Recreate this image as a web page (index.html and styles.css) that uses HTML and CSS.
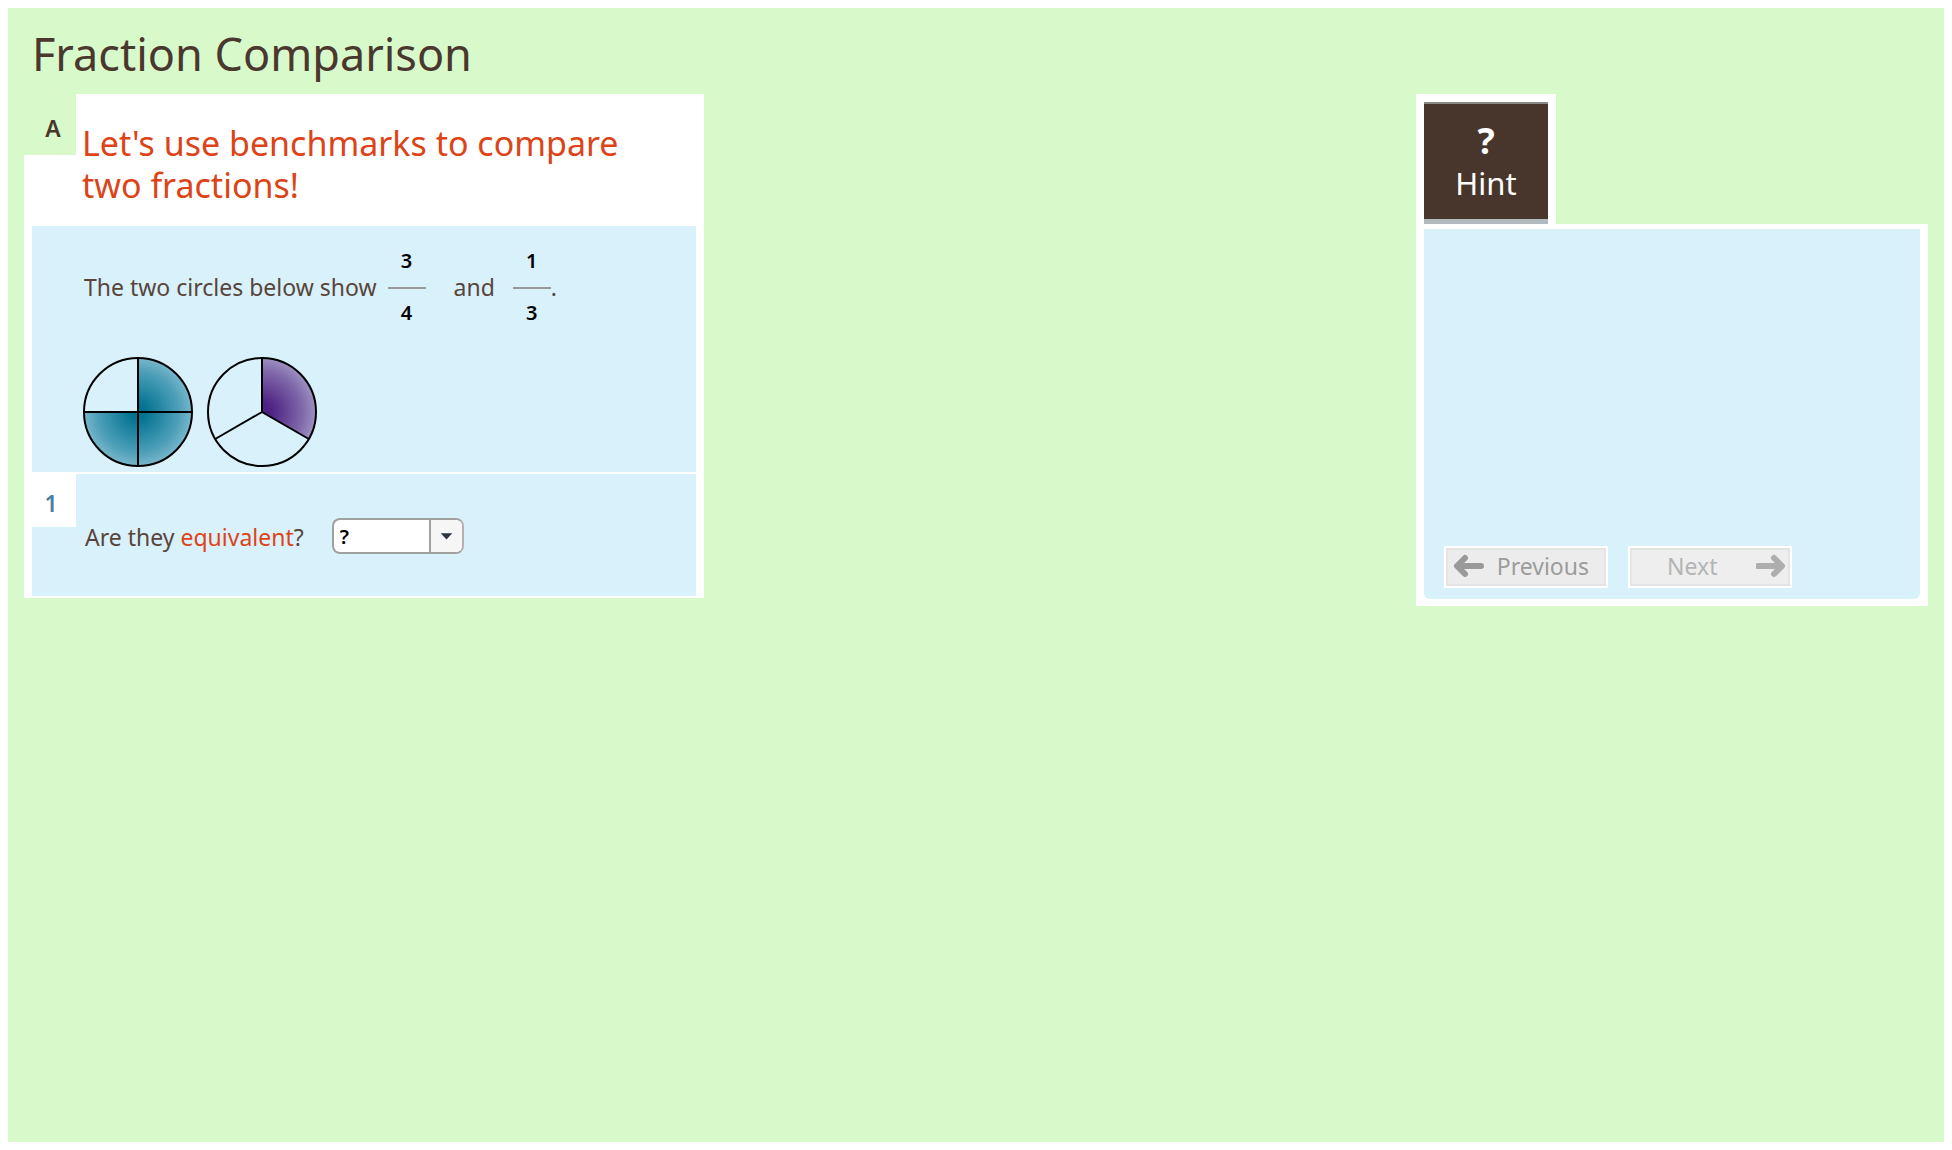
FILE: index.html
```html
<!DOCTYPE html>
<html lang="en">
<head>
<meta charset="utf-8">
<title>Fraction Comparison</title>
<link rel="stylesheet" href="styles.css">
</head>
<body>
<div class="tutor">
  <h1 class="title">Fraction Comparison</h1>
  <div class="columns">
    <main class="lesson">
      <header class="lesson-head">
        <span class="part">A</span>
        <h2 class="goal">Let's use benchmarks to compare two fractions!</h2>
      </header>
      <section class="panel intro">
        <div class="statement">
          <span class="lead">The two circles below show</span>
          <span class="fraction"><span class="num">3</span><span class="den">4</span></span>
          <span class="and">and</span>
          <span class="fraction"><span class="num">1</span><span class="den">3</span></span>
          <span>.</span>
        </div>
        <div class="circles">
          <svg width="112" height="112" viewBox="-56 -56 112 112" role="img" aria-label="Circle with three of four parts shaded">
            <defs>
              <radialGradient id="teal" gradientUnits="userSpaceOnUse" cx="0" cy="0" r="54">
                <stop offset="0" stop-color="#007090"/><stop offset=".15" stop-color="#057492"/><stop offset=".75" stop-color="#4d9fb8"/><stop offset="1" stop-color="#78b6cb"/>
              </radialGradient>
            </defs>
            <path d="M0 0V-54A54 54 0 1 1 -54 0Z" fill="url(#teal)"/>
            <g fill="none" stroke="#000" stroke-width="2"><circle r="54"/><path d="M0-54V54M-54 0H54"/></g>
          </svg>
          <svg width="112" height="112" viewBox="-56 -56 112 112" role="img" aria-label="Circle with one of three parts shaded">
            <defs>
              <radialGradient id="violet" gradientUnits="userSpaceOnUse" cx="0" cy="0" r="54">
                <stop offset="0" stop-color="#4b1d80"/><stop offset=".2" stop-color="#4f2585"/><stop offset=".75" stop-color="#8068a9"/><stop offset="1" stop-color="#9d91c3"/>
              </radialGradient>
            </defs>
            <path d="M0 0V-54A54 54 0 0 1 46.8 27Z" fill="url(#violet)"/>
            <g fill="none" stroke="#000" stroke-width="2"><circle r="54"/><path d="M0-54V0L46.8 27M0 0L-46.8 27"/></g>
          </svg>
        </div>
      </section>
      <section class="panel question">
        <span class="step">1</span>
        <label class="prompt" for="answer">Are they <span class="term">equivalent</span>?</label>
        <span class="combo">
          <select id="answer"><option>?</option><option>Yes</option><option>No</option></select>
          <svg class="combo-arrow" width="35" height="32" viewBox="0 0 35 32" aria-hidden="true"><path d="M11 13H24L17.500 20Z" fill="#2c3442"/></svg>
        </span>
      </section>
    </main>
    <aside class="help">
      <div class="tab">
        <button class="hint" type="button"><span class="mark">?</span><span>Hint</span></button>
      </div>
      <div class="help-box">
        <div class="help-body">
          <button class="nav prev" type="button">
            <svg width="32" height="24" viewBox="0 0 32 24" aria-hidden="true"><path d="M29 12H6M13 4L5 12L13 20" /></svg>
            <span>Previous</span>
          </button>
          <button class="nav next" type="button" disabled>
            <span>Next</span>
            <svg width="30" height="24" viewBox="0 0 30 24" aria-hidden="true"><path d="M2 12H25M18 4L26 12L18 20" /></svg>
          </button>
        </div>
      </div>
    </aside>
  </div>
</div>
</body>
</html>
```
FILE: styles.css
```css
* { box-sizing: border-box; }

body {
  margin: 0;
  padding: 8px;
  min-height: 100vh;
  display: flex;
  background: #fff;
  font-family: "Trebuchet MS", "Noto Sans", sans-serif;
  color: #57453c;
}

.tutor {
  flex: 1;
  padding: 16px;
  background: #d8facb;
}

.title {
  margin: 0;
  padding-left: 8px;
  height: 70px;
  font-size: 45px;
  line-height: 60px;
  font-weight: 400;
  color: #4a372d;
}

.columns {
  display: flex;
  justify-content: space-between;
  align-items: flex-start;
}

.lesson {
  width: 680px;
  padding-bottom: 2px;
  background: #fff;
}

.lesson-head {
  display: flex;
  align-items: flex-start;
  min-height: 132px;
}

.part {
  width: 52px;
  height: 61px;
  padding: 10px 0 0 6px;
  background: #d8facb;
  color: #4a372d;
  font-size: 23px;
  line-height: 48px;
  font-weight: 600;
  text-align: center;
}

.goal {
  flex: 1;
  margin: 0;
  padding: 28px 64px 0 6px;
  font-size: 34px;
  line-height: 42px;
  font-weight: 400;
  color: #dc4418;
}

.panel {
  margin: 0 8px;
  background: #d9f1fb;
}

.intro {
  padding: 16px 16px 4px 52px;
  height: 246px;
}

.statement {
  display: flex;
  align-items: center;
  height: 90px;
  font-size: 23px;
  line-height: 32px;
}

.lead { margin-right: 11px; }
.and { margin: 0 18px 0 28px; }

.fraction {
  display: flex;
  flex-direction: column;
  width: 38px;
  color: #000;
  font-size: 20px;
  line-height: 24px;
  font-weight: 600;
  text-align: center;
}

.num {
  padding: 0 0 14px;
  border-bottom: 2px solid #999;
}

.den { padding-top: 12px; }

.circles {
  display: flex;
  gap: 12px;
  margin-top: 24px;
  margin-left: -2px;
}

.question {
  display: flex;
  align-items: flex-start;
  height: 122px;
  margin-top: 2px;
  font-size: 23px;
  line-height: 32px;
}

.step {
  width: 44px;
  height: 53px;
  padding-right: 6px;
  background: #fff;
  color: #4c80a0;
  line-height: 58px;
  font-weight: 600;
  text-align: center;
}

.prompt { padding: 47px 0 0 9px; margin-right: 28px; }
.term { color: #dc4418; }

.combo {
  display: grid;
  grid-template-columns: 97px 35px;
  margin-top: 44px;
}

.combo select {
  grid-area: 1 / 1 / 2 / 3;
  appearance: none;
  height: 36px;
  margin: 0;
  padding: 0 0 0 6px;
  border: 2px solid #a3a0a2;
  border-right-color: #b4b0b2;
  border-radius: 8px;
  background: #fff;
  color: #000;
  font: 600 20px "Trebuchet MS", "Noto Sans", sans-serif;
}

.combo-arrow {
  grid-area: 1 / 2;
  align-self: center;
  width: 33px;
  border-left: 2px solid #a3a0a2;
  border-radius: 0 6px 6px 0;
  background: #f6f6f6;
  pointer-events: none;
}

.help { width: 512px; }

.tab {
  width: 140px;
  padding: 8px 8px 0;
  background: #fff;
}

.hint {
  display: flex;
  flex-direction: column;
  align-items: center;
  width: 100%;
  height: 122px;
  padding: 16px 0 0;
  border: solid #3d2d25;
  border-width: 2px 0 5px;
  border-top-color: #8a8985;
  border-bottom-color: #b0babf;
  background: #48352c;
  color: #fff;
  font: 31px/42px "Noto Sans", sans-serif;
}

.mark { font-weight: 700; font-size: 36px; }

.help-box {
  padding: 5px 8px 7px;
  background: #fff;
}

.help-body {
  display: flex;
  align-items: flex-end;
  gap: 20px;
  height: 370px;
  padding: 0 20px 11px;
  border-radius: 0 0 6px 6px;
  background: #d9f1fb;
}

.nav {
  display: flex;
  align-items: center;
  justify-content: space-between;
  width: 164px;
  height: 42px;
  padding: 0 17px 2px 6px;
  border: 2px solid #fff;
  background: #ececec;
  box-shadow: inset 0 0 0 2px #e4e4e4;
  color: #9c9c9c;
  font: 23px/32px "Noto Sans", sans-serif;
}

.nav svg {
  fill: none;
  stroke: #999;
  stroke-width: 6;
  stroke-linecap: round;
  stroke-linejoin: round;
}

.next {
  padding: 0 4px 2px 37px;
  background: #eee;
  color: #b4b4b4;
}

.next svg { stroke: #aeaeae; }
```
